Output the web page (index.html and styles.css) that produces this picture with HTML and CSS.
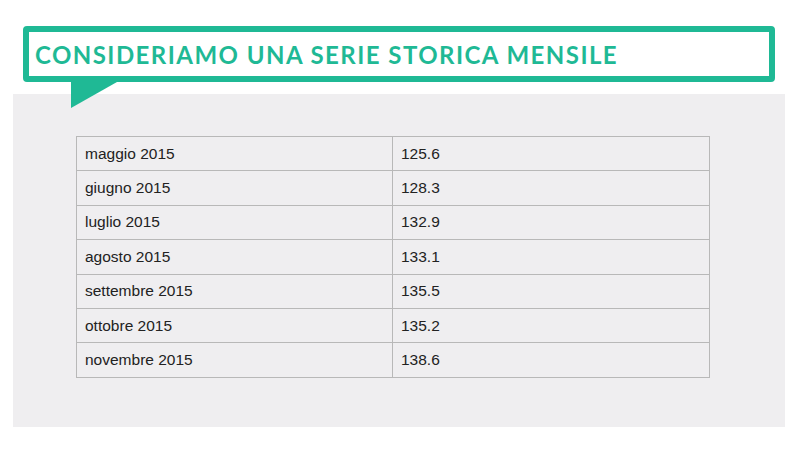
FILE: index.html
```html
<!DOCTYPE html>
<html lang="it">
<head>
<meta charset="utf-8">
<link rel="stylesheet" href="styles.css">
</head>
<body>
<div class="slide">
  <div class="title-box">
    <h1 class="title">CONSIDERIAMO UNA SERIE STORICA MENSILE</h1>
    <svg class="tail" width="46" height="26" viewBox="0 0 46 26"><polygon points="0,0 46,0 0,26" fill="#1fb995"/></svg>
  </div>
  <div class="panel">
    <table class="data">
      <tr><td>maggio 2015</td><td>125.6</td></tr>
      <tr><td>giugno 2015</td><td>128.3</td></tr>
      <tr><td>luglio 2015</td><td>132.9</td></tr>
      <tr><td>agosto 2015</td><td>133.1</td></tr>
      <tr><td>settembre 2015</td><td>135.5</td></tr>
      <tr><td>ottobre 2015</td><td>135.2</td></tr>
      <tr><td>novembre 2015</td><td>138.6</td></tr>
    </table>
  </div>
</div>
</body>
</html>
```
FILE: styles.css
```css
html, body {
  margin: 0;
  padding: 0;
  background: #ffffff;
}
.slide {
  width: 800px;
  height: 450px;
  padding-top: 26px;
  box-sizing: border-box;
}
.title-box {
  position: relative;
  margin-left: 23px;
  width: 752px;
  height: 56px;
  box-sizing: border-box;
  border: 6px solid #1fb995;
  border-radius: 4px;
  background: #ffffff;
  display: flex;
  align-items: center;
  padding-left: 6px;
  z-index: 2;
}
.title {
  margin: 0;
  font-family: Lato, "Open Sans", sans-serif;
  font-weight: 700;
  font-size: 24px;
  color: #1fb995;
  letter-spacing: 1.45px;
  line-height: 1;
  padding-top: 2px;
}
.tail {
  position: absolute;
  left: 42px;
  top: 50px;
  display: block;
}
.panel {
  margin-top: 12px;
  margin-left: 13px;
  width: 772px;
  height: 333px;
  box-sizing: border-box;
  background: #efeef0;
  padding-top: 42px;
  padding-left: 63px;
}
.data {
  width: 634px;
  border-collapse: collapse;
  font-family: "Liberation Sans", Arial, sans-serif;
  font-size: 15.5px;
  color: #222222;
}
.data td {
  border: 1px solid #b8b8b8;
  height: 34.4px;
  padding: 0 8px;
  box-sizing: border-box;
  vertical-align: middle;
}
.data td:first-child {
  width: 316px;
}
```
